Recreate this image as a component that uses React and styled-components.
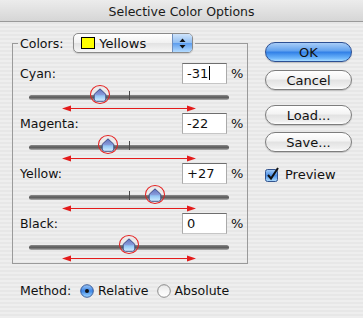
import React from 'react';
import styled, { createGlobalStyle } from 'styled-components';

const GlobalStyle = createGlobalStyle`
  html, body {
    margin: 0;
    padding: 0;
  }
  body {
    font-family: "DejaVu Sans", "Liberation Sans", sans-serif;
    font-size: 12.5px;
    color: #111;
  }
`;

// --- Window chrome ---
const Window = styled.div`
  width: 363px;
  height: 318px;
  overflow: hidden;
  background: repeating-linear-gradient(#eeeeee 0 2px, #e7e7e7 2px 4px);
`;

const TitleBar = styled.div`
  height: 22px;
  box-sizing: border-box;
  padding-top: 1px;
  border-bottom: 1px solid #9a9a9a;
  background: linear-gradient(#ececec, #d6d6d6);
  display: flex;
  align-items: center;
  justify-content: center;
  font-size: 12.5px;
  color: #1a1a1a;
`;

const Body = styled.div`
  display: flex;
  padding: 11px 0 0 12px;
  gap: 17px;
`;

const LeftColumn = styled.div`
  display: flex;
  flex-direction: column;
`;

const RightColumn = styled.div`
  display: flex;
  flex-direction: column;
  width: 87px;
  padding-top: 9px;
`;

// --- Group box ---
const GroupBox = styled.fieldset`
  margin: 0;
  width: 236px;
  box-sizing: border-box;
  border: 1px solid #9a9a9a;
  padding: 10px 6px 0 7px;
`;

const Legend = styled.legend`
  padding: 0 2px;
  margin-left: -2px;
`;

const LegendInner = styled.div`
  display: flex;
  align-items: center;
  gap: 10px;
  height: 20px;
`;

const Popup = styled.div`
  display: flex;
  align-items: stretch;
  width: 120px;
  height: 20px;
  box-sizing: border-box;
  border: 1px solid #8a8a8a;
  border-radius: 5px;
  overflow: hidden;
  background: linear-gradient(#ffffff, #f1f1f1 50%, #e2e2e2 51%, #f6f6f6);
  box-shadow: 0 1px 1px rgba(0, 0, 0, 0.15);
`;

const PopupValue = styled.div`
  flex: 1;
  display: flex;
  align-items: center;
  gap: 4px;
  padding-left: 7px;
  font-size: 13px;
`;

const Swatch = styled.span`
  width: 14px;
  height: 12px;
  box-sizing: border-box;
  border: 1px solid #000;
  background: ${(p) => p.color};
`;

const PopupArrows = styled.div`
  width: 19px;
  border-left: 1px solid #6f8fbf;
  background: linear-gradient(#cfe4fb, #8fbdf2 50%, #5c9ced 51%, #b3dbff);
  display: flex;
  align-items: center;
  justify-content: center;
`;

// --- Channel rows ---
const Channel = styled.div`
  display: flex;
  flex-direction: column;
`;

const Header = styled.div`
  display: flex;
  align-items: center;
  height: 20px;
`;

const Label = styled.span`
  flex: 1;
`;

const InputBox = styled.div`
  width: 45px;
  height: 21px;
  box-sizing: border-box;
  border: 1px solid;
  border-color: #6e6e6e #aaaaaa #c6c6c6 #aaaaaa;
  background: #fff;
  display: flex;
  align-items: center;
  padding-left: 4px;
  font-size: 13px;
`;

const Caret = styled.span`
  width: 1px;
  height: 14px;
  background: #000;
  margin-left: 1px;
`;

const Percent = styled.span`
  width: 10px;
  margin-left: 4px;
  font-size: 13px;
`;

const SliderArea = styled.div`
  position: relative;
  width: 200px;
  margin-left: 9px;
  padding: 12px 0 1px;
`;

const Track = styled.div`
  height: 5px;
  border-radius: 3px;
  background: linear-gradient(#8c8c8c, #585858 45%, #7a7a7a 70%, #b4b4b4);
`;

const Tick = styled.div`
  position: absolute;
  left: 100px;
  top: 8px;
  width: 1px;
  height: 9px;
  background: #4a4a4a;
`;

const Thumb = styled.svg`
  position: absolute;
  top: 5px;
  width: 14px;
  height: 14px;
  margin-left: -7px;
`;

const Ring = styled.div`
  position: absolute;
  top: 2px;
  width: 20px;
  height: 19px;
  margin-left: -10px;
  box-sizing: border-box;
  border: 1px solid #e52020;
  border-radius: 50%;
`;

const Arrow = styled.svg`
  display: block;
  margin: 5px 0 0 33px;
`;

// --- Buttons ---
const Button = styled.div`
  height: 20px;
  box-sizing: border-box;
  border-radius: 10px;
  display: flex;
  align-items: center;
  justify-content: center;
  font-size: 13px;
  margin-top: ${(p) => p.gap || 0}px;
  border: 1px solid ${(p) => (p.primary ? '#2c4f93' : '#7d7d7d')};
  background: ${(p) =>
    p.primary
      ? 'linear-gradient(#a8cdf7, #5fa0ee 45%, #2f7ee6 50%, #6fb7fb 85%, #a9dcff)'
      : 'linear-gradient(#ffffff, #f3f3f3 45%, #e2e2e2 50%, #efefef 85%, #ffffff)'};
  box-shadow: 0 1px 1px rgba(0, 0, 0, 0.18);
`;

const CheckRow = styled.div`
  display: flex;
  align-items: center;
  gap: 5px;
  margin-top: 15px;
  font-size: 13px;
`;

// --- Method row ---
const MethodRow = styled.div`
  display: flex;
  align-items: center;
  margin: 19px 0 0 8px;
`;

const RadioItem = styled.label`
  display: flex;
  align-items: center;
  gap: 4px;
  margin-left: ${(p) => p.offset}px;
`;

const channels = [
  { name: 'Cyan', value: -31, caret: true },
  { name: 'Magenta', value: -22 },
  { name: 'Yellow', value: 27 },
  { name: 'Black', value: 0 },
];

const format = (v) => (v > 0 ? `+${v}` : `${v}`);

const ThumbIcon = ({ left }) => (
  <Thumb viewBox="0 0 14 14" style={{ left }}>
    <defs>
      <linearGradient id="thumbFill" x1="0" y1="0" x2="0" y2="1">
        <stop offset="0" stopColor="#5d6fbd" />
        <stop offset="0.5" stopColor="#8b9fdc" />
        <stop offset="0.55" stopColor="#8fc3f4" />
        <stop offset="1" stopColor="#d5f0ff" />
      </linearGradient>
    </defs>
    <path
      d="M7 0.8 L12.8 6.3 V11 Q12.8 13.3 10.5 13.3 H3.5 Q1.2 13.3 1.2 11 V6.3 Z"
      fill="url(#thumbFill)"
      stroke="#39437e"
      strokeWidth="0.9"
    />
  </Thumb>
);

const RedArrow = () => (
  <Arrow width="134" height="7" viewBox="0 0 134 7">
    <line x1="6" y1="3.5" x2="128" y2="3.5" stroke="#e41b1b" strokeWidth="1.2" />
    <path d="M0 3.5 L9 0.5 L9 6.5 Z" fill="#e41b1b" />
    <path d="M134 3.5 L125 0.5 L125 6.5 Z" fill="#e41b1b" />
  </Arrow>
);

const Radio = ({ checked }) => (
  <svg width="14" height="14" viewBox="0 0 14 14">
    <defs>
      <linearGradient id="radioOn" x1="0" y1="0" x2="0" y2="1">
        <stop offset="0" stopColor="#9cc6f5" />
        <stop offset="0.5" stopColor="#3d86e6" />
        <stop offset="1" stopColor="#a7dbff" />
      </linearGradient>
      <linearGradient id="radioOff" x1="0" y1="0" x2="0" y2="1">
        <stop offset="0" stopColor="#e6e6e6" />
        <stop offset="0.5" stopColor="#f6f6f6" />
        <stop offset="1" stopColor="#ffffff" />
      </linearGradient>
    </defs>
    <circle
      cx="7"
      cy="7"
      r="6.3"
      fill={checked ? 'url(#radioOn)' : 'url(#radioOff)'}
      stroke={checked ? '#2f4f8f' : '#7f7f7f'}
      strokeWidth="0.9"
    />
    {checked && <circle cx="7" cy="7" r="2" fill="#111" />}
  </svg>
);

const Checkbox = () => (
  <svg width="15" height="15" viewBox="0 0 15 15">
    <defs>
      <linearGradient id="checkFill" x1="0" y1="0" x2="0" y2="1">
        <stop offset="0" stopColor="#a5cdf6" />
        <stop offset="0.5" stopColor="#4d91e8" />
        <stop offset="1" stopColor="#b2e0ff" />
      </linearGradient>
    </defs>
    <rect x="0.5" y="2.5" width="12" height="12" rx="2" fill="url(#checkFill)" stroke="#34548f" />
    <path d="M3 8 L6 11.5 L13 1" fill="none" stroke="#111" strokeWidth="2" />
  </svg>
);

const App = () => (
  <Window>
    <GlobalStyle />
    <TitleBar>Selective Color Options</TitleBar>
    <Body>
      <LeftColumn>
        <GroupBox>
          <Legend>
            <LegendInner>
              <span>Colors:</span>
              <Popup>
                <PopupValue>
                  <Swatch color="#ffff00" />
                  Yellows
                </PopupValue>
                <PopupArrows>
                  <svg width="7" height="11" viewBox="0 0 7 11">
                    <path d="M3.5 0.5 L6.5 4 H0.5 Z" fill="#111" />
                    <path d="M3.5 10.5 L6.5 7 H0.5 Z" fill="#111" />
                  </svg>
                </PopupArrows>
              </Popup>
            </LegendInner>
          </Legend>
          {channels.map((c) => {
            const pos = 100 + c.value * 0.95;
            return (
              <Channel key={c.name}>
                <Header>
                  <Label>{c.name}:</Label>
                  <InputBox>
                    {format(c.value)}
                    {c.caret && <Caret />}
                  </InputBox>
                  <Percent>%</Percent>
                </Header>
                <SliderArea>
                  <Track />
                  <Tick />
                  <ThumbIcon left={pos} />
                  <Ring style={{ left: pos }} />
                  <RedArrow />
                </SliderArea>
              </Channel>
            );
          })}
        </GroupBox>
        <MethodRow>
          Method:
          <RadioItem offset={9}>
            <Radio checked />
            Relative
          </RadioItem>
          <RadioItem offset={8}>
            <Radio />
            Absolute
          </RadioItem>
        </MethodRow>
      </LeftColumn>
      <RightColumn>
        <Button primary>OK</Button>
        <Button gap={8}>Cancel</Button>
        <Button gap={15}>Load...</Button>
        <Button gap={7}>Save...</Button>
        <CheckRow>
          <Checkbox />
          Preview
        </CheckRow>
      </RightColumn>
    </Body>
  </Window>
);

export default App;
